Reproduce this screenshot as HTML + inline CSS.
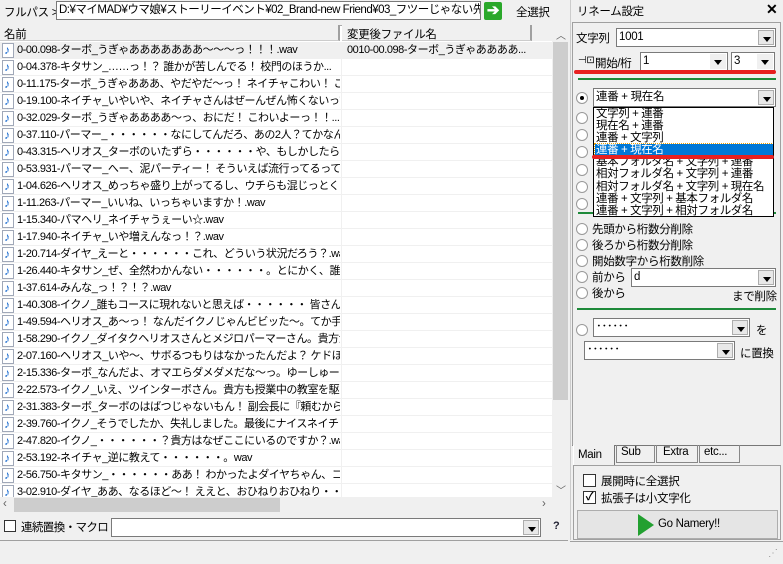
<!DOCTYPE html>
<html><head><meta charset="utf-8"><style>
*{box-sizing:border-box;margin:0;padding:0}
body{width:783px;height:564px;background:#f0f0f0;font-family:"Liberation Sans","Noto Sans CJK JP",sans-serif;font-size:11.5px;letter-spacing:-0.3px;color:#000;position:relative;overflow:hidden}
.a{position:absolute}
.in{position:absolute;background:#fff;border:1px solid #7a7a7a;white-space:nowrap;overflow:hidden;line-height:16px;padding-left:2px}
.row{position:absolute;left:0;width:552px;height:17px;border-bottom:1px solid #f0f0f0;white-space:nowrap;line-height:16px;font-size:11px;letter-spacing:-0.45px}
.row .ic{position:absolute;left:2px;top:1px;width:12px;height:15px;border:1px solid #a0a8b8;background:#fff}
.row .ic:after{content:"♪";position:absolute;left:1px;top:-2px;color:#1c6cd0;font-size:12px;font-weight:bold}
.row .t{position:absolute;left:17px;top:0;width:323px;overflow:hidden}
.row .c{position:absolute;left:341px;top:0;width:1px;height:17px;background:#f0f0f0}
.dd{position:absolute;right:1px;top:1px;width:16px;bottom:1px;background:#e8e8e8;border:1px solid #adadad}
.dd:after{content:"";position:absolute;left:4px;top:6px;border:4px solid transparent;border-top:5px solid #000;border-bottom:0}
.rad{position:absolute;width:12px;height:12px;border-radius:50%;border:1px solid #999;background:#fff}
.lbl{position:absolute;white-space:nowrap}
</style></head><body>
<div class="lbl" style="left:4px;top:4px">フルパス &gt;</div>
<div class="in" style="left:56px;top:1px;width:425px;height:19px;letter-spacing:-0.5px">D:¥マイMAD¥ウマ娘¥ストーリーイベント¥02_Brand-new Friend¥03_フツーじゃない先輩たち</div>
<div class="a" style="left:484px;top:2px;width:18px;height:18px;background:#2aa82a;border-radius:2px;color:#fff;font-weight:bold;text-align:center;line-height:17px;font-size:15px">➔</div>
<div class="lbl" style="left:516px;top:4px">全選択</div>
<div class="a" style="left:0;top:25px;width:552px;height:17px;background:#fff;border-top:1px solid #aaa"></div>
<div class="a" style="left:0;top:25px;width:340px;height:16px;background:#f0f0f0;border-right:2px solid #a0a0a0;border-bottom:1px solid #ccc"></div>
<div class="lbl" style="left:4px;top:26px">名前</div>
<div class="a" style="left:342px;top:25px;width:190px;height:16px;background:#f0f0f0;border-right:2px solid #a0a0a0;border-bottom:1px solid #ccc"></div>
<div class="lbl" style="left:347px;top:26px">変更後ファイル名</div>
<div class="a" style="left:532px;top:25px;width:20px;height:16px;background:#f0f0f0"></div>
<div class="a" style="left:0;top:42px;width:552px;height:455px;background:#fff;overflow:hidden">
<div class="row" style="top:0;background:#f0f0f0"><div class="ic"></div><div class="t">0-00.098-ターボ_うぎゃあああああああ〜〜〜っ！！！.wav</div><div class="c"></div><div class="a" style="left:347px">0010-00.098-ターボ_うぎゃああああ...</div></div>
<div class="row" style="top:17px"><div class="ic"></div><div class="t">0-04.378-キタサン_……っ！？ 誰かが苦しんでる！ 校門のほうか...</div><div class="c"></div></div>
<div class="row" style="top:34px"><div class="ic"></div><div class="t">0-11.175-ターボ_うぎゃあああ、やだやだ〜っ！ ネイチャこわい！ こっ...</div><div class="c"></div></div>
<div class="row" style="top:51px"><div class="ic"></div><div class="t">0-19.100-ネイチャ_いやいや、ネイチャさんはぜーんぜん怖くないって。...</div><div class="c"></div></div>
<div class="row" style="top:68px"><div class="ic"></div><div class="t">0-32.029-ターボ_うぎゃああああ〜っ、おにだ！ こわいよーっ！！...</div><div class="c"></div></div>
<div class="row" style="top:85px"><div class="ic"></div><div class="t">0-37.110-パーマー_・・・・・・なにしてんだろ、あの2人？てかなんでネ...</div><div class="c"></div></div>
<div class="row" style="top:102px"><div class="ic"></div><div class="t">0-43.315-ヘリオス_ターボのいたずら・・・・・・や、もしかしたら泥パーテ...</div><div class="c"></div></div>
<div class="row" style="top:119px"><div class="ic"></div><div class="t">0-53.931-パーマー_へー、泥パーティー！ そういえば流行ってるって...</div><div class="c"></div></div>
<div class="row" style="top:136px"><div class="ic"></div><div class="t">1-04.626-ヘリオス_めっちゃ盛り上がってるし、ウチらも混じっとく？ ひ...</div><div class="c"></div></div>
<div class="row" style="top:153px"><div class="ic"></div><div class="t">1-11.263-パーマー_いいね、いっちゃいますか！.wav</div><div class="c"></div></div>
<div class="row" style="top:170px"><div class="ic"></div><div class="t">1-15.340-パマヘリ_ネイチャうぇーい☆.wav</div><div class="c"></div></div>
<div class="row" style="top:187px"><div class="ic"></div><div class="t">1-17.940-ネイチャ_いや増えんなっ！？.wav</div><div class="c"></div></div>
<div class="row" style="top:204px"><div class="ic"></div><div class="t">1-20.714-ダイヤ_えーと・・・・・・これ、どういう状況だろう？.wav</div><div class="c"></div></div>
<div class="row" style="top:221px"><div class="ic"></div><div class="t">1-26.440-キタサン_ぜ、全然わかんない・・・・・・。とにかく、誰か呼ぶ...</div><div class="c"></div></div>
<div class="row" style="top:238px"><div class="ic"></div><div class="t">1-37.614-みんな_っ！？！？.wav</div><div class="c"></div></div>
<div class="row" style="top:255px"><div class="ic"></div><div class="t">1-40.308-イクノ_誰もコースに現れないと思えば・・・・・・ 皆さん、掃...</div><div class="c"></div></div>
<div class="row" style="top:272px"><div class="ic"></div><div class="t">1-49.594-ヘリオス_あ〜っ！ なんだイクノじゃんビビッた〜。てか手帳...</div><div class="c"></div></div>
<div class="row" style="top:289px"><div class="ic"></div><div class="t">1-58.290-イクノ_ダイタクヘリオスさんとメジロパーマーさん。貴方がた...</div><div class="c"></div></div>
<div class="row" style="top:306px"><div class="ic"></div><div class="t">2-07.160-ヘリオス_いや〜、サボるつもりはなかったんだよ？ ケドほら...</div><div class="c"></div></div>
<div class="row" style="top:323px"><div class="ic"></div><div class="t">2-15.336-ターボ_なんだよ、オマエらダメダメだな〜っ。ゆーしゅーなタ...</div><div class="c"></div></div>
<div class="row" style="top:340px"><div class="ic"></div><div class="t">2-22.573-イクノ_いえ、ツインターボさん。貴方も授業中の教室を駆...</div><div class="c"></div></div>
<div class="row" style="top:357px"><div class="ic"></div><div class="t">2-31.383-ターボ_ターボのはばつじゃないもん！ 副会長に『頼むから...</div><div class="c"></div></div>
<div class="row" style="top:374px"><div class="ic"></div><div class="t">2-39.760-イクノ_そうでしたか、失礼しました。最後にナイスネイチャ...</div><div class="c"></div></div>
<div class="row" style="top:391px"><div class="ic"></div><div class="t">2-47.820-イクノ_・・・・・・？貴方はなぜここにいるのですか？.wav</div><div class="c"></div></div>
<div class="row" style="top:408px"><div class="ic"></div><div class="t">2-53.192-ネイチャ_逆に教えて・・・・・・。wav</div><div class="c"></div></div>
<div class="row" style="top:425px"><div class="ic"></div><div class="t">2-56.750-キタサン_・・・・・・ああ！ わかったよダイヤちゃん、コントだ...</div><div class="c"></div></div>
<div class="row" style="top:442px"><div class="ic"></div><div class="t">3-02.910-ダイヤ_ああ、なるほど〜！ ええと、おひねりおひねり・・・・</div><div class="c"></div></div>
</div>
<div class="a" style="left:552px;top:25px;width:17px;height:472px;background:#f0f0f0"></div>
<div class="a" style="left:553px;top:42px;width:15px;height:358px;background:#cdcdcd"></div>
<div class="lbl" style="left:556px;top:27px;font-size:10px;color:#606060">︿</div>
<div class="lbl" style="left:556px;top:482px;font-size:10px;color:#606060">﹀</div>
<div class="a" style="left:0;top:497px;width:552px;height:16px;background:#f0f0f0"></div>
<div class="a" style="left:14px;top:498px;width:266px;height:14px;background:#cdcdcd"></div>
<div class="lbl" style="left:3px;top:498px;color:#606060">‹</div>
<div class="lbl" style="left:542px;top:498px;color:#606060">›</div>
<div class="a" style="left:4px;top:520px;width:12px;height:12px;border:1px solid #333;background:#fff"></div>
<div class="lbl" style="left:21px;top:519px;letter-spacing:-0.6px">連続置換・マクロ</div>
<div class="in" style="left:111px;top:518px;width:430px;height:19px"><div class="dd"></div></div>
<div class="lbl" style="left:553px;top:520px;font-weight:bold;font-size:11px;color:#223">?</div>
<div class="a" style="left:0;top:540px;width:568px;height:1px;background:#a0a0a0"></div>
<div class="a" style="left:570px;top:0;width:1px;height:540px;background:#ccc"></div>
<div class="lbl" style="left:577px;top:3px">リネーム設定</div>
<div class="lbl" style="left:766px;top:1px;font-weight:bold;font-size:14px">✕</div>
<div class="a" style="left:572px;top:22px;width:209px;height:424px;border:1px solid #a0a0a0;border-bottom-color:#777"></div>
<div class="lbl" style="left:576px;top:30px">文字列</div>
<div class="in" style="left:616px;top:28px;width:160px;height:19px">1001<div class="dd"></div></div>
<div class="lbl" style="left:578px;top:55px;font-size:10px">⊣⊡</div>
<div class="lbl" style="left:595px;top:55px">開始/桁</div>
<div class="in" style="left:640px;top:52px;width:88px;height:19px">1<div class="dd" style="background:#f0f0f0;border:0"></div></div>
<div class="in" style="left:731px;top:52px;width:44px;height:19px">3<div class="dd" style="background:#f0f0f0;border:0"></div></div>
<div class="a" style="left:574px;top:70px;width:202px;height:4px;background:#e82020;border-radius:2px"></div>
<div class="a" style="left:578px;top:78px;width:198px;height:2px;background:#1e8a3a"></div>
<div class="rad" style="left:576px;top:92px"></div><div class="a" style="left:580px;top:96px;width:4px;height:4px;border-radius:50%;background:#000"></div>
<div class="in" style="left:593px;top:88px;width:183px;height:19px">連番 + 現在名<div class="dd"></div></div>
<div class="rad" style="left:576px;top:112px"></div>
<div class="rad" style="left:576px;top:129px"></div>
<div class="rad" style="left:576px;top:146px"></div>
<div class="rad" style="left:576px;top:164px"></div>
<div class="rad" style="left:576px;top:181px"></div>
<div class="rad" style="left:576px;top:198px"></div>
<div class="a" style="left:578px;top:212px;width:198px;height:2px;background:#1e8a3a"></div>
<div class="a" style="left:593px;top:107px;width:181px;height:110px;background:#fff;border:1px solid #000;line-height:12.1px;font-size:11.5px;letter-spacing:-0.4px;padding-left:2px;white-space:nowrap;overflow:hidden">
<div>文字列 + 連番</div><div>現在名 + 連番</div><div>連番 + 文字列</div>
<div style="background:#0078d7;color:#fff;margin-left:-1px;padding-left:1px;outline:1px dotted #f0a000">連番 + 現在名</div>
<div>基本フォルダ名 + 文字列 + 連番</div><div>相対フォルダ名 + 文字列 + 連番</div><div>相対フォルダ名 + 文字列 + 現在名</div><div>連番 + 文字列 + 基本フォルダ名</div><div>連番 + 文字列 + 相対フォルダ名</div>
</div>
<div class="a" style="left:592px;top:155px;width:182px;height:4px;background:#e82020;border-radius:2px"></div>
<div class="rad" style="left:576px;top:223px"></div><div class="lbl" style="left:592px;top:221px">先頭から桁数分削除</div>
<div class="rad" style="left:576px;top:239px"></div><div class="lbl" style="left:592px;top:237px">後ろから桁数分削除</div>
<div class="rad" style="left:576px;top:255px"></div><div class="lbl" style="left:592px;top:253px">開始数字から桁数削除</div>
<div class="rad" style="left:576px;top:271px"></div><div class="lbl" style="left:592px;top:269px">前から</div>
<div class="in" style="left:631px;top:268px;width:145px;height:19px">d<div class="dd"></div></div>
<div class="rad" style="left:576px;top:287px"></div><div class="lbl" style="left:592px;top:285px">後から</div>
<div class="lbl" style="left:732px;top:288px">まで削除</div>
<div class="a" style="left:577px;top:308px;width:199px;height:2px;background:#1e8a3a"></div>
<div class="rad" style="left:576px;top:324px"></div>
<div class="in" style="left:593px;top:318px;width:157px;height:19px">･･････<div class="dd"></div></div>
<div class="lbl" style="left:756px;top:322px">を</div>
<div class="in" style="left:584px;top:341px;width:151px;height:19px">･･････<div class="dd"></div></div>
<div class="lbl" style="left:740px;top:345px">に置換</div>
<div class="a" style="left:573px;top:445px;width:42px;height:20px;background:#f0f0f0;border-left:1px solid #fff;border-right:1px solid #777"></div>
<div class="lbl" style="left:578px;top:449px">Main</div>
<div class="a" style="left:616px;top:445px;width:39px;height:18px;border:1px solid #888;border-top:0"></div><div class="lbl" style="left:621px;top:446px">Sub</div>
<div class="a" style="left:656px;top:445px;width:42px;height:18px;border:1px solid #888;border-top:0"></div><div class="lbl" style="left:663px;top:446px">Extra</div>
<div class="a" style="left:699px;top:445px;width:41px;height:18px;border:1px solid #888;border-top:0"></div><div class="lbl" style="left:704px;top:446px">etc...</div>
<div class="a" style="left:573px;top:465px;width:208px;height:75px;border:1px solid #a0a0a0"></div>
<div class="a" style="left:583px;top:474px;width:13px;height:13px;border:1px solid #333;background:#fff"></div>
<div class="lbl" style="left:601px;top:473px">展開時に全選択</div>
<div class="a" style="left:583px;top:491px;width:13px;height:13px;border:1px solid #333;background:#fff;font-size:11px;line-height:11px;text-align:center;font-weight:bold">✓</div>
<div class="lbl" style="left:601px;top:490px">拡張子は小文字化</div>
<div class="a" style="left:577px;top:510px;width:201px;height:29px;border:1px solid #adadad;background:#e5e5e5"></div>
<div class="a" style="left:638px;top:514px;border-left:16px solid #22a030;border-top:11px solid transparent;border-bottom:11px solid transparent"></div>
<div class="lbl" style="left:658px;top:518px">Go Namery!!</div>
<div class="a" style="left:570px;top:541px;width:213px;height:1px;background:#a0a0a0"></div>
<div class="lbl" style="left:768px;top:548px;color:#999;font-size:10px">⋰</div>
</body></html>
